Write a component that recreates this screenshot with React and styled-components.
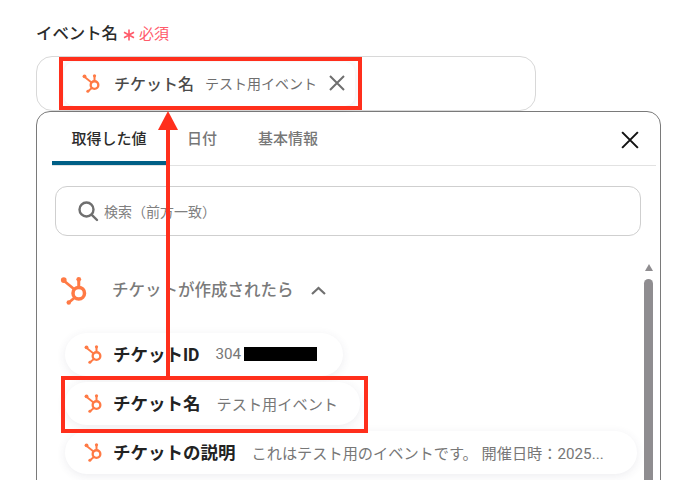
import React from 'react';
import styled, { createGlobalStyle } from 'styled-components';

const GlobalStyle = createGlobalStyle`
  html, body {
    margin: 0;
    padding: 0;
    background: #fff;
  }
  body {
    font-family: Roboto, "Noto Sans CJK JP", "Noto Sans", sans-serif;
  }
`;

const Page = styled.div`
  position: relative;
  width: 697px;
  height: 480px;
  overflow: hidden;
  padding: 20px 36px 0;
  box-sizing: border-box;
  background: #fff;
`;

const FieldLabel = styled.div`
  display: flex;
  align-items: center;
  height: 24px;
  font-size: 16.4px;
  font-weight: 500;
  color: #2b2b2b;
`;

const Asterisk = styled.span`
  display: flex;
  margin: 5px 0 0 5px;
`;

const Required = styled.span`
  margin: 1px 0 0 4px;
  color: #ff5a6a;
  font-size: 15px;
  font-weight: 400;
`;

const InputBox = styled.div`
  display: flex;
  align-items: center;
  box-sizing: border-box;
  width: 500px;
  height: 55px;
  margin-top: 12px;
  padding-left: 27px;
  border: 1px solid #d8d8d8;
  border-radius: 16px;
`;

const SelectedChip = styled.div`
  display: flex;
  align-items: center;
  box-sizing: border-box;
  height: 44px;
  padding: 0 10px 2px 18px;
  border-radius: 10px;
  background: #fff;
  box-shadow: 0 1px 8px rgba(60, 50, 90, 0.1);
`;

const ChipName = styled.span`
  margin-left: 12px;
  font-size: 16px;
  color: #4a4a4a;
  font-weight: 500;
  white-space: nowrap;
`;

const ChipValue = styled.span`
  margin-left: 11px;
  font-size: 14px;
  color: #6f6f6f;
  white-space: nowrap;
`;

const RemoveButton = styled.span`
  display: flex;
  margin-left: 12px;
`;

const Panel = styled.div`
  box-sizing: border-box;
  width: 625px;
  height: 420px;
  border: 1px solid #7a7a7a;
  border-radius: 14px;
  background: #fff;
  padding: 0 4px 0 15px;
`;

const TabBar = styled.div`
  display: flex;
  align-items: stretch;
  height: 53px;
  border-bottom: 1px solid #e2e2e2;
`;

const Tab = styled.div`
  display: flex;
  align-items: center;
  justify-content: center;
  box-sizing: border-box;
  width: ${(p) => p.$width}px;
  height: 53px;
  padding-top: 2px;
  font-size: 15px;
  font-weight: 500;
  color: ${(p) => (p.$active ? '#2b2b2b' : '#777')};
  border-bottom: 4px solid ${(p) => (p.$active ? '#005f86' : 'transparent')};
  border-radius: 4px 4px 0 0;
`;

const CloseButton = styled.span`
  display: flex;
  margin-left: auto;
  margin-right: 17px;
  margin-top: 2px;
  align-items: center;
`;

const SearchBox = styled.div`
  display: flex;
  align-items: center;
  box-sizing: border-box;
  width: 586px;
  height: 50px;
  margin: 20px 0 0 3px;
  padding-left: 21px;
  border: 1px solid #cfcfcf;
  border-radius: 12px;
`;

const SearchText = styled.span`
  margin-left: 5px;
  font-size: 14px;
  color: #808080;
  margin-top: -1px;
`;

const Body = styled.div`
  display: flex;
  margin-top: 28px;
`;

const List = styled.div`
  flex: 0 0 589px;
`;

const GroupHeader = styled.div`
  display: flex;
  align-items: center;
  height: 52px;
  padding-left: 8px;
`;

const GroupTitle = styled.span`
  margin-left: 22px;
  font-size: 16.5px;
  font-weight: 500;
  color: #7a7a7a;
  margin-top: -2px;
`;

const Chevron = styled.span`
  display: flex;
  margin-left: 17px;
`;

const Rows = styled.div`
  display: flex;
  flex-direction: column;
  align-items: flex-start;
  gap: 6px;
  margin-top: 17px;
  padding-left: 13px;
`;

const Row = styled.div`
  display: flex;
  align-items: center;
  box-sizing: border-box;
  width: ${(p) => p.$width}px;
  height: 43px;
  padding: 0 0 2px 19px;
  border-radius: 22px;
  background: #fff;
  box-shadow: 0 2px 10px rgba(60, 50, 90, 0.09);
`;

const RowName = styled.span`
  margin-left: 9px;
  font-size: 17.5px;
  font-weight: 700;
  color: #222;
  white-space: nowrap;
`;

const RowValue = styled.span`
  margin-left: 16px;
  font-size: 15.2px;
  color: #777;
  white-space: nowrap;
  display: flex;
  align-items: center;
`;

const Redaction = styled.span`
  display: inline-block;
  width: 73px;
  height: 14px;
  margin-left: 3px;
  background: #000;
`;

const Scrollbar = styled.div`
  display: flex;
  flex-direction: column;
  align-items: center;
  width: 9px;
  margin-left: 3px;
`;

const ScrollArrow = styled.div`
  width: 0;
  height: 0;
  border-left: 4.5px solid transparent;
  border-right: 4.5px solid transparent;
  border-bottom: 7px solid #8f8d90;
`;

const ScrollThumb = styled.div`
  width: 9px;
  height: 220px;
  margin-top: 8px;
  border-radius: 5px 5px 0 0;
  background: #8f8d90;
`;

const Highlight = styled.div`
  position: absolute;
  box-sizing: border-box;
  left: ${(p) => p.$left}px;
  top: ${(p) => p.$top}px;
  width: ${(p) => p.$width}px;
  height: ${(p) => p.$height}px;
  border: 4px solid #ff2f1c;
`;

const ArrowOverlay = styled.svg`
  position: absolute;
  left: 158px;
  top: 108px;
`;

const HubspotIcon = ({ size = 20 }) => (
  <svg width={size} height={size} viewBox="0 0 24 24" fill="none" stroke="#ff7a45" strokeLinecap="round">
    <circle cx="15" cy="14.5" r="4.6" strokeWidth="2.8" />
    <path d="M15 9.5V4.5" strokeWidth="2.4" />
    <circle cx="15" cy="3.4" r="1.9" fill="#ff7a45" stroke="none" />
    <path d="M11.4 11.4L3.6 5" strokeWidth="2.2" />
    <circle cx="3" cy="4" r="2.3" fill="#ff7a45" stroke="none" />
    <path d="M11.8 18L7.6 21.6" strokeWidth="2.2" />
    <circle cx="7" cy="22" r="1.8" fill="#ff7a45" stroke="none" />
  </svg>
);

const CrossIcon = ({ size, color, width }) => (
  <svg width={size} height={size} viewBox="0 0 16 16" fill="none" stroke={color} strokeWidth={width}>
    <path d="M1 1L15 15M15 1L1 15" />
  </svg>
);

const SearchIcon = () => (
  <svg width="22" height="22" viewBox="0 0 22 22" fill="none" stroke="#6f6f6f" strokeWidth="2.4" strokeLinecap="round">
    <circle cx="9.5" cy="9.5" r="7" />
    <path d="M14.8 14.8L20 20" />
  </svg>
);

const ChevronIcon = () => (
  <svg width="15" height="9" viewBox="0 0 15 9" fill="none" stroke="#707070" strokeWidth="2.2">
    <path d="M1 8L7.5 2L14 8" />
  </svg>
);

const AsteriskIcon = () => (
  <svg width="12" height="12" viewBox="0 0 12 12" fill="none" stroke="#ff5a6a" strokeWidth="1.6">
    <path d="M6 0.5V11.5M1 3.2L11 8.8M11 3.2L1 8.8" />
  </svg>
);

const rows = [
  { name: 'チケットID', value: '304', width: 278, redacted: true },
  { name: 'チケット名', value: 'テスト用イベント', width: 295 },
  { name: 'チケットの説明', value: 'これはテスト用のイベントです。 開催日時：2025...', width: 572 },
];

const App = () => (
  <>
    <GlobalStyle />
    <Page>
      <FieldLabel>
        イベント名
        <Asterisk>
          <AsteriskIcon />
        </Asterisk>
        <Required>必須</Required>
      </FieldLabel>
      <InputBox>
        <SelectedChip>
          <HubspotIcon />
          <ChipName>チケット名</ChipName>
          <ChipValue>テスト用イベント</ChipValue>
          <RemoveButton>
            <CrossIcon size={16} color="#6f6f6f" width={2} />
          </RemoveButton>
        </SelectedChip>
      </InputBox>
      <Panel>
        <TabBar>
          <Tab $active $width={114}>取得した値</Tab>
          <Tab $width={72}>日付</Tab>
          <Tab $width={100}>基本情報</Tab>
          <CloseButton>
            <CrossIcon size={18} color="#111" width={1.8} />
          </CloseButton>
        </TabBar>
        <SearchBox>
          <SearchIcon />
          <SearchText>検索（前方一致）</SearchText>
        </SearchBox>
        <Body>
          <List>
            <GroupHeader>
              <HubspotIcon size={30} />
              <GroupTitle>チケットが作成されたら</GroupTitle>
              <Chevron>
                <ChevronIcon />
              </Chevron>
            </GroupHeader>
            <Rows>
              {rows.map((row) => (
                <Row key={row.name} $width={row.width}>
                  <HubspotIcon />
                  <RowName>{row.name}</RowName>
                  <RowValue>
                    {row.value}
                    {row.redacted && <Redaction />}
                  </RowValue>
                </Row>
              ))}
            </Rows>
          </List>
          <Scrollbar>
            <ScrollArrow />
            <ScrollThumb />
          </Scrollbar>
        </Body>
      </Panel>
      <Highlight $left={59} $top={57} $width={303} $height={53} />
      <Highlight $left={61} $top={376} $width={307} $height={57} />
      <ArrowOverlay width="20" height="270" viewBox="0 0 20 270">
        <path d="M10 20V268" stroke="#ff2f1c" strokeWidth="4" />
        <path d="M10 3L20 22H0Z" fill="#ff2f1c" />
      </ArrowOverlay>
    </Page>
  </>
);

export default App;
